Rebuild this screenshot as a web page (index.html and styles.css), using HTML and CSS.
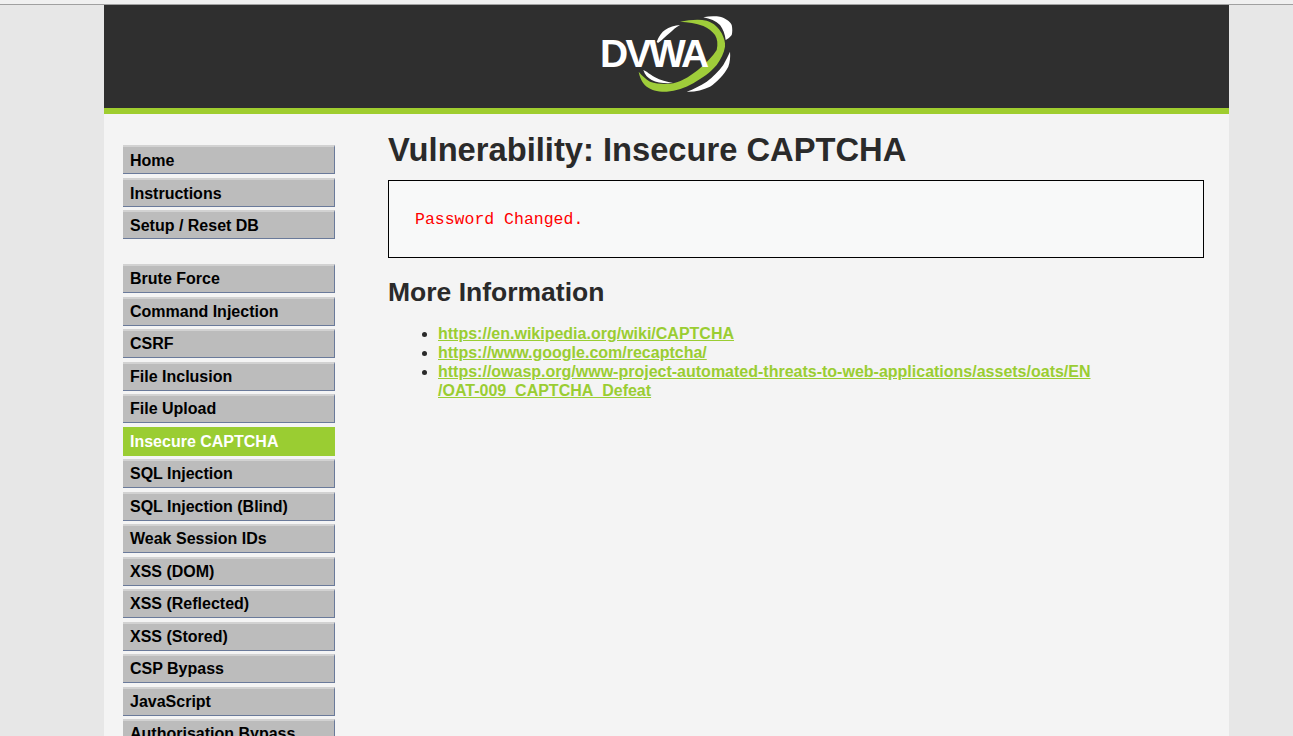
FILE: index.html
```html
<!DOCTYPE html>
<html lang="en">
<head>
    <meta charset="UTF-8">
    <meta name="viewport" content="width=device-width, initial-scale=1.0">
    <title>Vulnerability: Insecure CAPTCHA</title>
    <link rel="stylesheet" href="styles.css">
</head>
<body>

<div class="top-line"></div>

<div class="container">
    <div class="header">
        <div class="logo">
            <svg class="logo-swoosh" viewBox="0 0 139 80" xmlns="http://www.w3.org/2000/svg">
                <path d="M83 6.7 C92 5 102 4 109.7 5.7 C117 8 122 13 124.7 18.3 C127 23 128.5 27 128 31.7 C127 38 124 44 119.7 50 C113 58 105 63 96.3 68.3 C88 73 79 76 69.7 76.7 C61 77 54 75 49.7 71.7 C45 68 42.5 62 41.7 56.7 C45 61 49 64 53 66.7 C60 69 68 69.5 76.3 68.3 C86 66 95 60 103 53.3 C110 47 116 41 119.7 35 C121 29 120.5 24 118 20 C115 16 111 13 106.3 11 C99 8 91 7 83 6.7 Z" fill="#9fcd3a"/>
                <path d="M106.3 2.3 C112 1 118 1 123 1.7 C128 3 133 6 134.7 10 C135.5 14 135.5 17 134.7 20 C133 22 131 24 128.7 25 C128 19 126 14 123 10 C119 6 113 3.5 106.3 2.3 Z" fill="#fff"/>
                <path d="M133 36.7 C133.5 42 133 47 131.3 51.7 C127 60 120 67 113 71.7 C106 75 98 77 89.7 76.7 C97 74 103 71 109.7 66.7 C116 62 122 56 126.3 50 C129 45 131 41 133 36.7 Z" fill="#fff"/>
                <path d="M59.7 26.7 C62 21 65 17 68 15 C72 12 78 10.5 83 10 C79 12 76 15 73 17.7 C69 21 65 25 61 28 Z" fill="#fff"/>
                <path d="M46.3 55 C48 60 51 63 54.7 65 C60 68 68 68.5 76 68 C70 67 63 65 58 62.3 C55 60.5 52 58.5 49.7 56.7 Z" fill="#fff"/>
            </svg>
            <span class="logo-text">DVWA</span>
        </div>
    </div>

    <div class="main">
        <div class="menu">
            <ul class="menu-block">
                <li><a href="#">Home</a></li>
                <li><a href="#">Instructions</a></li>
                <li><a href="#">Setup / Reset DB</a></li>
            </ul>
            <ul class="menu-block">
                <li><a href="#">Brute Force</a></li>
                <li><a href="#">Command Injection</a></li>
                <li><a href="#">CSRF</a></li>
                <li><a href="#">File Inclusion</a></li>
                <li><a href="#">File Upload</a></li>
                <li class="selected"><a href="#">Insecure CAPTCHA</a></li>
                <li><a href="#">SQL Injection</a></li>
                <li><a href="#">SQL Injection (Blind)</a></li>
                <li><a href="#">Weak Session IDs</a></li>
                <li><a href="#">XSS (DOM)</a></li>
                <li><a href="#">XSS (Reflected)</a></li>
                <li><a href="#">XSS (Stored)</a></li>
                <li><a href="#">CSP Bypass</a></li>
                <li><a href="#">JavaScript</a></li>
                <li><a href="#">Authorisation Bypass</a></li>
            </ul>
        </div>

        <div class="content">
            <h1>Vulnerability: Insecure CAPTCHA</h1>
            <div class="vulnerable-code">
                <pre>Password Changed.</pre>
            </div>
            <h2>More Information</h2>
            <ul class="links">
                <li><a href="#">https://en.wikipedia.org/wiki/CAPTCHA</a></li>
                <li><a href="#">https://www.google.com/recaptcha/</a></li>
                <li><a href="#">https://owasp.org/www-project-automated-threats-to-web-applications/assets/oats/EN<br>/OAT-009_CAPTCHA_Defeat</a></li>
            </ul>
        </div>
    </div>
</div>

</body>
</html>
```

FILE: styles.css
```css
* {
    box-sizing: border-box;
}

html, body {
    height: 100%;
}

body {
    margin: 0;
    overflow: hidden;
    background-color: #e7e7e7;
    color: #2a2a2a;
    font-family: "Liberation Sans", Arial, sans-serif;
    font-size: 16px;
}

.top-line {
    height: 5px;
    background-color: #f0f0f0;
    border-bottom: 1px solid #a0a0a0;
}

.container {
    width: 1125px;
    margin-left: 104px;
    height: 731px;
    overflow: hidden;
    background-color: #f4f4f4;
}

.header {
    height: 109px;
    display: flex;
    justify-content: center;
    background-color: #2f2f2f;
    border-bottom: 6px solid #9fcd2f;
}

.logo {
    position: relative;
    width: 139px;
    height: 80px;
    margin-top: 10px;
}

.logo-swoosh {
    position: absolute;
    top: 0;
    left: 0;
    width: 139px;
    height: 80px;
}

.logo-text {
    position: absolute;
    top: 17px;
    left: 3px;
    color: #fff;
    font-size: 39px;
    line-height: 44px;
    font-weight: 700;
    letter-spacing: -2.6px;
}

.main {
    display: flex;
    align-items: flex-start;
}

.menu {
    width: 212px;
    margin: 31px 0 0 19px;
    flex-shrink: 0;
}

.menu-block {
    list-style: none;
    margin: 0 0 25px 0;
    padding: 0;
}

.menu-block li {
    height: 29px;
    margin-bottom: 3.5px;
    background-color: #bcbcbc;
    border-top: 2px solid #d2d2d2;
    border-right: 1px solid #6a7a9a;
    border-bottom: 1px solid #6a7a9a;
}

.menu-block a {
    display: block;
    padding-left: 7px;
    color: #000;
    font-size: 16px;
    line-height: 26px;
    font-weight: 700;
    text-decoration: none;
}

.menu-block:first-child a {
    line-height: 27px;
}

.menu-block li.selected {
    background-color: #9acd32;
    border-color: #9acd32;
}

.menu-block li.selected a {
    color: #fff;
}

.content {
    width: 816px;
    margin-left: 53px;
}

h1 {
    margin: 17px 0 11px 0;
    color: #2a2a2a;
    font-size: 32.7px;
    line-height: 38px;
}

.vulnerable-code {
    height: 78px;
    padding: 0 26px;
    display: flex;
    align-items: center;
    background-color: #f8f9f9;
    border: 1px solid #000;
}

.vulnerable-code pre {
    margin: 0;
    color: #f00;
    font-family: "Liberation Mono", "Courier New", monospace;
    font-size: 16.5px;
}

h2 {
    margin: 18px 0 0 0;
    color: #2a2a2a;
    font-size: 26.5px;
    line-height: 32px;
}

.links {
    margin: 16px 0 0 0;
    padding-left: 50px;
}

.links li {
    line-height: 19px;
}

.links a {
    color: #9acd32;
    font-weight: 700;
}
```
